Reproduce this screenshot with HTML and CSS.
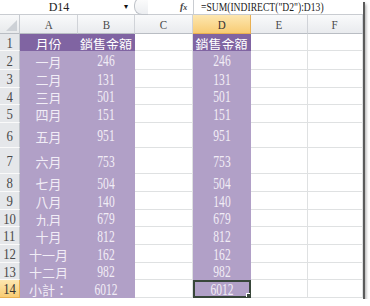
FILE: index.html
```html
<!DOCTYPE html>
<html lang="zh-Hant">
<head>
    <meta charset="UTF-8">
    <title>SUM INDIRECT</title>
    <link rel="stylesheet" href="styles.css">
</head>
<body>
<div class="frame">
    <div class="fbar">
        <div class="namebox">D14</div>
        <div class="drop">&#9662;</div>
        <div class="pill"></div>
        <div class="fx">f<span class="x">x</span></div>
        <div class="formula"><span class="ftext">=SUM(INDIRECT("D2"):D13)</span></div>
    </div>

    <div class="sheet">
        <!-- column headers -->
        <div class="corner"><svg width="11" height="11" viewBox="0 0 11 11"><path d="M11 0 L11 11 L0 11 Z" fill="#cdd1d6"/></svg></div>
        <div class="ch"><span class="n">A</span></div>
        <div class="ch"><span class="n">B</span></div>
        <div class="ch"><span class="n">C</span></div>
        <div class="ch sel"><span class="n">D</span></div>
        <div class="ch"><span class="n">E</span></div>
        <div class="ch"><span class="n">F</span></div>

        <div class="rh"><span class="n">1</span></div>
        <div class="c hd">月份</div>
        <div class="c hd">銷售金額</div>
        <div class="c"></div>
        <div class="c hd">銷售金額</div>
        <div class="c"></div>
        <div class="c"></div>

        <div class="rh"><span class="n">2</span></div>
        <div class="c fill">一月</div>
        <div class="c fill"><span class="v">246</span></div>
        <div class="c"></div>
        <div class="c fill"><span class="v">246</span></div>
        <div class="c"></div>
        <div class="c"></div>

        <div class="rh"><span class="n">3</span></div>
        <div class="c fill">二月</div>
        <div class="c fill"><span class="v">131</span></div>
        <div class="c"></div>
        <div class="c fill"><span class="v">131</span></div>
        <div class="c"></div>
        <div class="c"></div>

        <div class="rh"><span class="n">4</span></div>
        <div class="c fill">三月</div>
        <div class="c fill"><span class="v">501</span></div>
        <div class="c"></div>
        <div class="c fill"><span class="v">501</span></div>
        <div class="c"></div>
        <div class="c"></div>

        <div class="rh"><span class="n">5</span></div>
        <div class="c fill">四月</div>
        <div class="c fill"><span class="v">151</span></div>
        <div class="c"></div>
        <div class="c fill"><span class="v">151</span></div>
        <div class="c"></div>
        <div class="c"></div>

        <div class="rh"><span class="n">6</span></div>
        <div class="c fill">五月</div>
        <div class="c fill"><span class="v">951</span></div>
        <div class="c"></div>
        <div class="c fill"><span class="v">951</span></div>
        <div class="c"></div>
        <div class="c"></div>

        <div class="rh"><span class="n">7</span></div>
        <div class="c fill">六月</div>
        <div class="c fill"><span class="v">753</span></div>
        <div class="c"></div>
        <div class="c fill"><span class="v">753</span></div>
        <div class="c"></div>
        <div class="c"></div>

        <div class="rh"><span class="n">8</span></div>
        <div class="c fill">七月</div>
        <div class="c fill"><span class="v">504</span></div>
        <div class="c"></div>
        <div class="c fill"><span class="v">504</span></div>
        <div class="c"></div>
        <div class="c"></div>

        <div class="rh"><span class="n">9</span></div>
        <div class="c fill">八月</div>
        <div class="c fill"><span class="v">140</span></div>
        <div class="c"></div>
        <div class="c fill"><span class="v">140</span></div>
        <div class="c"></div>
        <div class="c"></div>

        <div class="rh"><span class="n">10</span></div>
        <div class="c fill">九月</div>
        <div class="c fill"><span class="v">679</span></div>
        <div class="c"></div>
        <div class="c fill"><span class="v">679</span></div>
        <div class="c"></div>
        <div class="c"></div>

        <div class="rh"><span class="n">11</span></div>
        <div class="c fill">十月</div>
        <div class="c fill"><span class="v">812</span></div>
        <div class="c"></div>
        <div class="c fill"><span class="v">812</span></div>
        <div class="c"></div>
        <div class="c"></div>

        <div class="rh"><span class="n">12</span></div>
        <div class="c fill">十一月</div>
        <div class="c fill"><span class="v">162</span></div>
        <div class="c"></div>
        <div class="c fill"><span class="v">162</span></div>
        <div class="c"></div>
        <div class="c"></div>

        <div class="rh"><span class="n">13</span></div>
        <div class="c fill">十二月</div>
        <div class="c fill"><span class="v">982</span></div>
        <div class="c"></div>
        <div class="c fill"><span class="v">982</span></div>
        <div class="c"></div>
        <div class="c"></div>

        <div class="rh sel"><span class="n">14</span></div>
        <div class="c fill">小計：</div>
        <div class="c fill"><span class="v">6012</span></div>
        <div class="c"></div>
        <div class="c fill active"><span class="v">6012</span></div>
        <div class="c"></div>
        <div class="c"></div>
    </div>
</div>
</body>
</html>
```

FILE: styles.css
```css
body {
    margin: 0;
    background: #fff;
    font-family: "Liberation Serif", "Noto Sans CJK TC", serif;
}
.frame {
    width: 363px;
    height: 299px;
    overflow: hidden;
    background: #fff;
    box-shadow: 2px 2px 0 #5b5b5b, 3px 4px 3px rgba(0, 0, 0, 0.35);
}

/* formula bar */
.fbar {
    display: flex;
    height: 14px;
    border-bottom: 1px solid #c9ccd1;
    font-size: 12px;
    line-height: 14px;
    color: #222;
}
.namebox {
    width: 118px;
    text-align: center;
}
.drop {
    width: 16px;
    font-size: 8px;
    text-align: center;
    color: #111;
    font-family: "DejaVu Sans", sans-serif;
}
.pill {
    width: 13px;
    height: 16px;
    margin-top: -3px;
    border: 1px solid #bfc3c9;
    border-right: none;
    border-radius: 8px 0 0 8px;
    background: linear-gradient(#fdfdfd, #eceef1);
}
.fx {
    margin-left: 32px;
    width: 13px;
    font-style: italic;
    font-size: 10px;
    font-weight: bold;
    color: #444;
}
.fx .x {
    font-size: 8px;
}
.formula {
    flex: 1;
    border-left: 1px solid #c9ccd1;
    padding-left: 7px;
}
.ftext {
    display: inline-block;
    transform: scaleX(0.8);
    transform-origin: left center;
    white-space: nowrap;
}

/* grid */
.sheet {
    display: grid;
    grid-template-columns: 20px 58px 57px 58px 58px 57px 55px;
    grid-template-rows: 19px 17px 19px 18px 17px 18px 25px 26px 18px 18px 17px 18px 18px 17px 18px;
}
.sheet > div {
    box-sizing: border-box;
    display: flex;
    align-items: center;
    justify-content: center;
    overflow: hidden;
}
.corner {
    background: linear-gradient(#f8f9fa, #e8eaec);
    border-right: 1px solid #c7cbd0;
    border-bottom: 1px solid #b9bdc3;
    align-items: flex-end !important;
    justify-content: flex-end !important;
    padding: 0 2px 2px 0;
}
.ch {
    background: linear-gradient(#f9fafb, #e9ebee);
    border-right: 1px solid #d0d3d8;
    border-bottom: 1px solid #b9bdc3;
    color: #4a4a4a;
    font-size: 13px;
    padding-top: 1px;
}
.rh {
    background: #e5e7ea;
    border-right: 1px solid #bfc3c9;
    border-bottom: 1px solid #fafafa;
    color: #4a4a4a;
    font-size: 15px;
    padding-top: 2px;
}
.ch.sel,
.rh.sel {
    background: linear-gradient(#fde7b0, #f8cc74);
    border-color: #e9b052;
    color: #333;
}
.n {
    display: inline-block;
    transform: scaleX(0.85);
}
.c {
    border-right: 1px solid #dfe1e2;
    border-bottom: 1px solid #dfe1e2;
    color: #f1edf6;
    font-size: 13px;
    padding-top: 2px;
}
.c.hd {
    background: #8064a2;
    border-color: #8064a2;
    color: #fff;
}
.c.fill {
    background: #b1a0c7;
    border-color: #b1a0c7;
}
.v {
    display: inline-block;
    font-size: 16px;
    line-height: 14px;
    transform: scaleX(0.72);
}
.c.active {
    position: relative;
    outline: 2px solid #38463a;
    outline-offset: -2px;
}
.c.active::after {
    content: "";
    position: absolute;
    right: -2px;
    bottom: -2px;
    width: 4px;
    height: 4px;
    background: #38463a;
    border: 1px solid #fff;
}
```
